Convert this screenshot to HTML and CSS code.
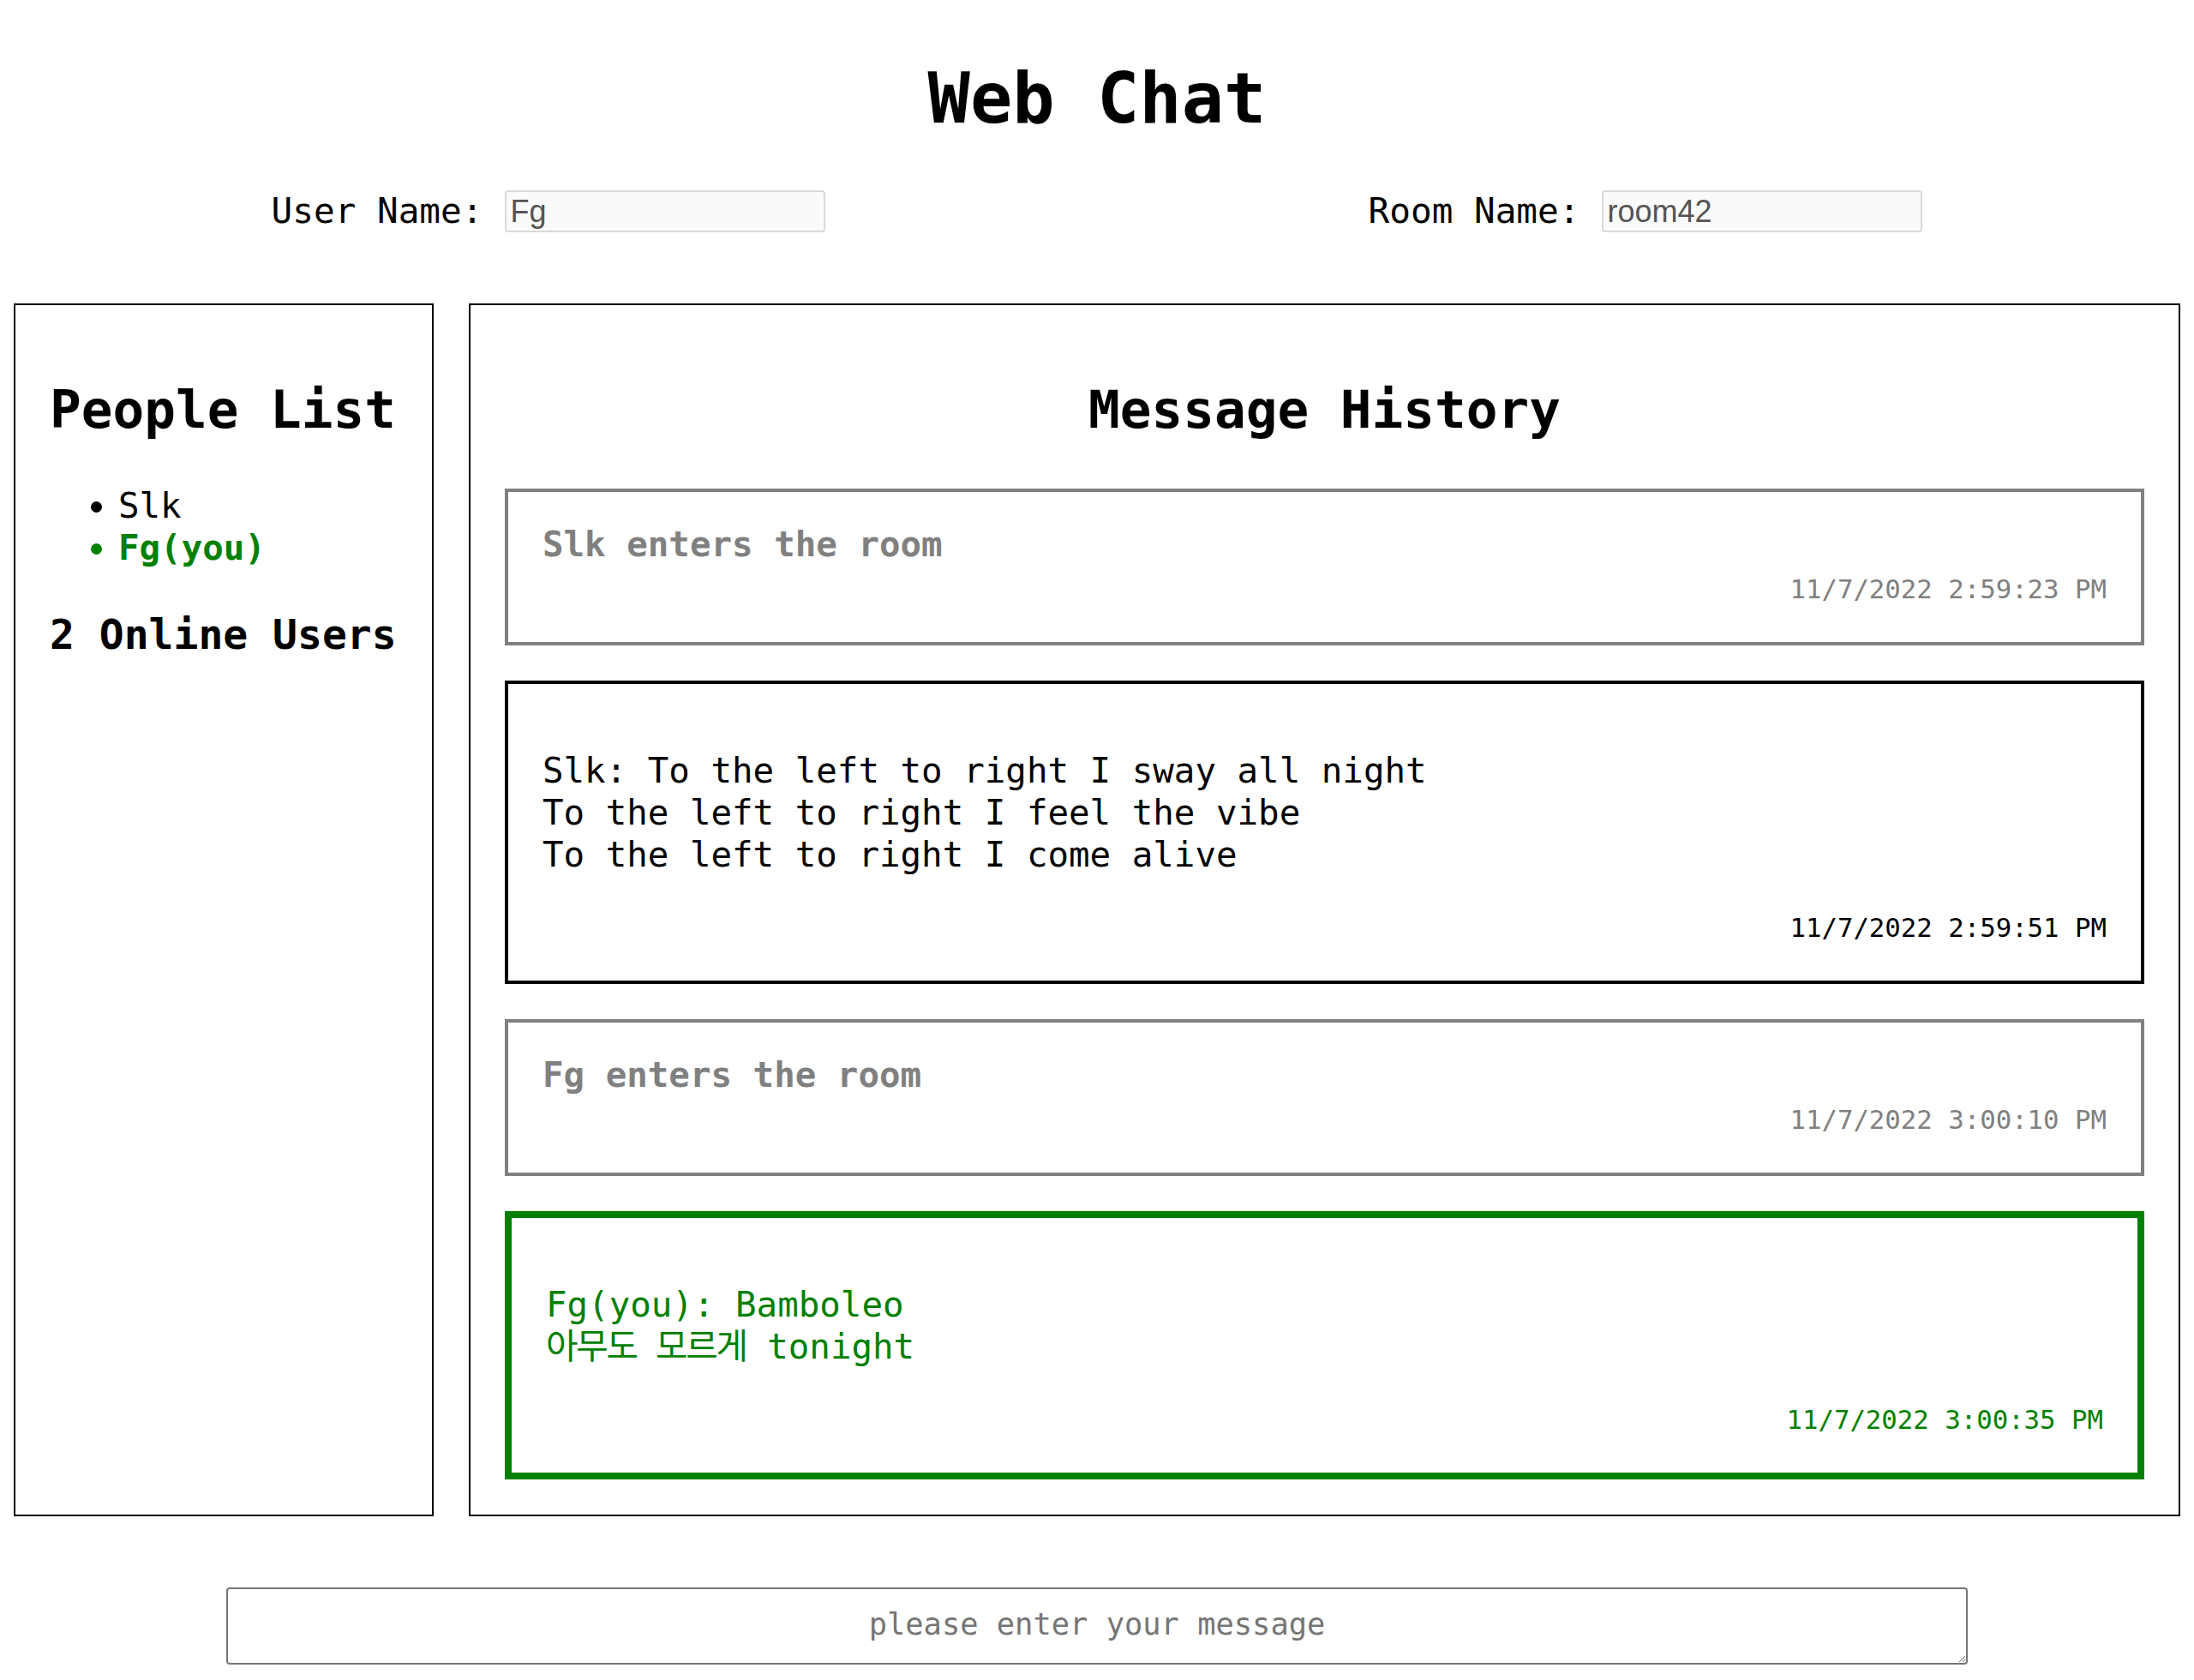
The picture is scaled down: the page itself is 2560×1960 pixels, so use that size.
FILE: index.html
```html
<!DOCTYPE html>
<html lang="en">
<head>
<meta charset="utf-8">
<title>Web Chat</title>
<link rel="stylesheet" href="styles.css">
</head>
<body>
  <h1 class="title">Web Chat</h1>
  <div class="settings">
    <label class="field"><span class="field-label">User Name:</span><input class="field-input" value="Fg" disabled></label>
    <label class="field"><span class="field-label">Room Name:</span><input class="field-input" value="room42" disabled></label>
  </div>
  <main class="chat">
    <section class="panel people">
      <h2 class="panel-title">People List</h2>
      <ul class="people-list">
        <li>Slk</li>
        <li class="me">Fg(you)</li>
      </ul>
      <h3 class="online-count">2 Online Users</h3>
    </section>
    <section class="panel history">
      <h2 class="panel-title">Message History</h2>
      <div class="msg msg-system">
        <div class="msg-text">Slk enters the room</div>
        <div class="msg-time">11/7/2022 2:59:23 PM</div>
      </div>
      <div class="msg msg-other">
        <p class="msg-text">Slk: To the left to right I sway all night<br>To the left to right I feel the vibe<br>To the left to right I come alive</p>
        <div class="msg-time">11/7/2022 2:59:51 PM</div>
      </div>
      <div class="msg msg-system">
        <div class="msg-text">Fg enters the room</div>
        <div class="msg-time">11/7/2022 3:00:10 PM</div>
      </div>
      <div class="msg msg-self">
        <p class="msg-text">Fg(you): Bamboleo<br><span class="ko" lang="ko">아무도 모르게</span> tonight</p>
        <div class="msg-time">11/7/2022 3:00:35 PM</div>
      </div>
    </section>
  </main>
  <textarea class="composer" placeholder="please enter your message"></textarea>
</body>
</html>
```

FILE: styles.css
```css
html, body {
  margin: 0;
  padding: 0;
  background: #ffffff;
}

body {
  font-family: "DejaVu Sans Mono", "Liberation Mono", "Noto Sans CJK KR", monospace;
  color: #000000;
  font-size: 40.8px;
}

.title {
  margin: 68px 0 0;
  font-size: 82px;
  line-height: 94px;
  font-weight: bold;
  text-align: center;
}

.settings {
  margin-top: 60px;
  display: flex;
  justify-content: space-around;
  align-items: center;
  height: 49px;
}

.field {
  display: flex;
  align-items: center;
  gap: 26px;
}

.field-label {
  font-size: 41px;
  line-height: 49px;
  white-space: nowrap;
}

.field-input {
  box-sizing: border-box;
  width: 374px;
  height: 49px;
  margin: 0;
  padding: 2px 4px;
  font-family: "Liberation Sans", Arial, sans-serif;
  font-size: 36px;
  color: #545454;
  background: #fafafa;
  border: 2px solid #d9d9d9;
  border-radius: 4px;
}

.chat {
  margin-top: 83px;
  padding: 0 16px;
  display: flex;
  gap: 41px;
  align-items: stretch;
}

.panel {
  border: 2px solid #000000;
  padding: 40px 40px 41px;
}

.people {
  width: 490px;
  box-sizing: border-box;
  flex: none;
}

.history {
  flex: 1;
  min-width: 0;
}

.panel-title {
  margin: 47px 0 57px;
  font-size: 61px;
  line-height: 70px;
  font-weight: bold;
  white-space: nowrap;
}

.people .panel-title {
  margin-bottom: 53px;
}

.history .panel-title {
  text-align: center;
}

.people-list {
  margin: 0;
  padding-left: 80px;
  font-size: 40.8px;
  line-height: 49px;
  list-style: disc;
}

.people-list .me {
  color: #008000;
  font-weight: bold;
}

.online-count {
  margin: 48px 0 0;
  font-size: 48px;
  line-height: 56px;
  font-weight: bold;
  white-space: nowrap;
}

.msg {
  border: 4px solid #000000;
  padding: 37px 40px 43px;
  margin-bottom: 41px;
}

.msg:last-child {
  margin-bottom: 0;
}

.msg-text {
  margin: 0;
  font-size: 40.8px;
  line-height: 49px;
}

p.msg-text {
  margin: 40px 0 43px;
}

.ko {
  letter-spacing: -2.3px;
}

.msg-time {
  margin-top: 10px;
  font-size: 30.7px;
  line-height: 36px;
  text-align: right;
}

.msg-system {
  border-color: #808080;
  color: #808080;
}

.msg-system .msg-text {
  font-weight: bold;
}

.msg-other {
  border-color: #000000;
  color: #000000;
}

.msg-self {
  border: 8px solid #008000;
  color: #008000;
}

.composer {
  display: block;
  box-sizing: border-box;
  width: 2032px;
  height: 90px;
  margin: 83px auto 0;
  padding: 20px 6px;
  font-family: "DejaVu Sans Mono", "Liberation Mono", monospace;
  font-size: 35.4px;
  line-height: 41px;
  text-align: center;
  border: 2px solid #767676;
  border-radius: 4px;
  background: #ffffff;
  color: #000000;
}

.composer::placeholder {
  color: #757575;
}
```
